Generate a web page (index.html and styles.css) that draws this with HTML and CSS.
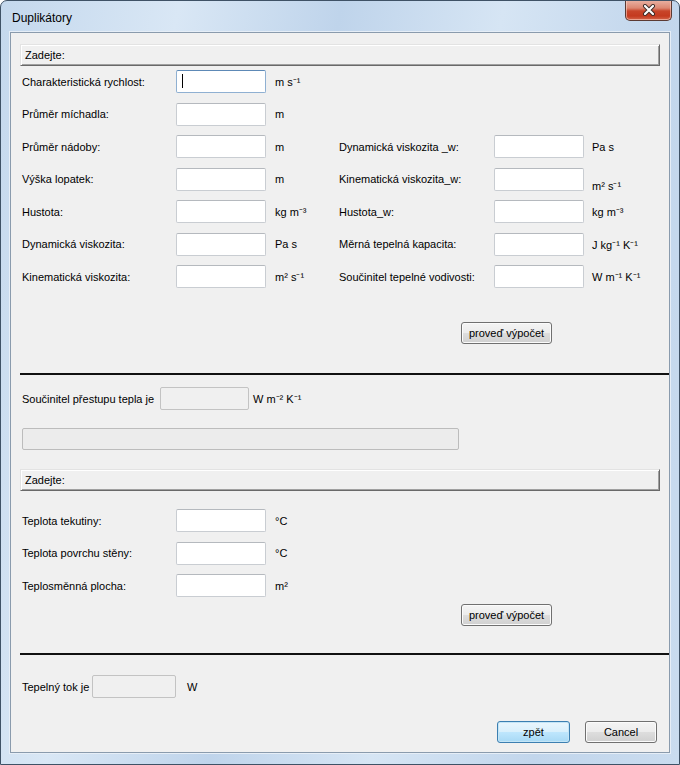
FILE: index.html
```html
<!DOCTYPE html>
<html lang="cs">
<head>
<meta charset="utf-8">
<title>Duplikátory</title>
<link rel="stylesheet" href="styles.css">
</head>
<body>
<div class="window">
  <div class="titlebar">
    <span class="title">Duplikátory</span>
    <button class="close" type="button" aria-label="Zavřít">
      <svg width="14" height="12" viewBox="0 0 14 12">
        <path d="M3 2 L11 10 M11 2 L3 10" stroke="#3b2a26" stroke-width="4" stroke-linecap="round"/>
        <path d="M3 2 L11 10 M11 2 L3 10" stroke="#ffffff" stroke-width="2.2" stroke-linecap="round"/>
      </svg>
    </button>
  </div>
  <div class="client">
    <div class="section-head">Zadejte:</div>
    <div class="form-grid">
      <label>Charakteristická rychlost:</label>
      <div class="field focused"><input type="text"><span class="caret"></span></div>
      <span class="unit">m s⁻¹</span>
      <span></span><span></span><span></span>

      <label>Průměr míchadla:</label>
      <input type="text">
      <span class="unit">m</span>
      <span></span><span></span><span></span>

      <label>Průměr nádoby:</label>
      <input type="text">
      <span class="unit">m</span>
      <label>Dynamická viskozita _w:</label>
      <input type="text">
      <span class="unit right">Pa s</span>

      <label>Výška lopatek:</label>
      <input type="text">
      <span class="unit">m</span>
      <label>Kinematická viskozita_w:</label>
      <input type="text">
      <span class="unit right low">m² s⁻¹</span>

      <label>Hustota:</label>
      <input type="text">
      <span class="unit">kg m⁻³</span>
      <label>Hustota_w:</label>
      <input type="text">
      <span class="unit right">kg m⁻³</span>

      <label>Dynamická viskozita:</label>
      <input type="text">
      <span class="unit">Pa s</span>
      <label>Měrná tepelná kapacita:</label>
      <input type="text">
      <span class="unit right">J kg⁻¹ K⁻¹</span>

      <label>Kinematická viskozita:</label>
      <input type="text">
      <span class="unit">m² s⁻¹</span>
      <label>Součinitel tepelné vodivosti:</label>
      <input type="text">
      <span class="unit right">W m⁻¹ K⁻¹</span>
    </div>
    <button class="btn calc" type="button">proveď výpočet</button>
    <div class="sep"></div>
    <div class="result-row">
      <span class="result-label">Součinitel přestupu tepla je</span>
      <input class="readonly coef" type="text" disabled>
      <span class="result-unit">W m⁻² K⁻¹</span>
    </div>
    <div class="wide-box"></div>
    <div class="section-head second">Zadejte:</div>
    <div class="form-grid small">
      <label>Teplota tekutiny:</label>
      <input type="text">
      <span class="unit">°C</span>

      <label>Teplota povrchu stěny:</label>
      <input type="text">
      <span class="unit">°C</span>

      <label>Teplosměnná plocha:</label>
      <input type="text">
      <span class="unit">m²</span>
    </div>
    <button class="btn calc second" type="button">proveď výpočet</button>
    <div class="sep second"></div>
    <div class="flux-row">
      <span class="flux-label">Tepelný tok je</span>
      <input class="readonly flux" type="text" disabled>
      <span class="flux-unit">W</span>
    </div>
    <div class="footer">
      <button class="btn default back" type="button">zpět</button>
      <button class="btn cancel" type="button">Cancel</button>
    </div>
  </div>
</div>
</body>
</html>
```
FILE: styles.css
```css
* { box-sizing: border-box; }

html, body {
  margin: 0;
  padding: 0;
  background: #ffffff;
}

body {
  font-family: "Liberation Sans", Arial, sans-serif;
  font-size: 11px;
  color: #000000;
}

.window {
  width: 680px;
  height: 765px;
  border: 1px solid #3f5266;
  border-radius: 7px 7px 0 0;
  padding: 0 9px;
  background: linear-gradient(100deg, #c4d8ed 0%, #d9e7f5 22%, #bfd4eb 42%, #d6e5f4 62%, #c2d6ec 82%, #cadcef 100%);
  display: flex;
  flex-direction: column;
  overflow: hidden;
}

.titlebar {
  height: 31px;
  display: flex;
  justify-content: space-between;
  align-items: flex-start;
}

.title {
  font-size: 12px;
  padding: 10px 0 0 2px;
  line-height: 15px;
  color: #000000;
}

.close {
  width: 47px;
  height: 21px;
  margin: -1px -2px 0 0;
  padding: 0;
  border: 1px solid #5b3a33;
  border-top: none;
  border-radius: 0 0 5px 5px;
  background: linear-gradient(#eab3a5 0%, #dc8772 40%, #c8452a 55%, #c43a1f 80%, #d4654a 100%);
  box-shadow: inset 0 0 0 1px rgba(255, 220, 210, 0.55);
  display: flex;
  align-items: center;
  justify-content: center;
}

.client {
  height: 721px;
  border: 1px solid #8a9bad;
  background: #f0f0f0;
  padding-left: 9px;
  display: flex;
  flex-direction: column;
  align-items: flex-start;
  box-shadow: 0 0 0 1px #e6eef7;
}

.section-head {
  margin-top: 11px;
  width: 640px;
  height: 22px;
  padding-left: 4px;
  line-height: 20px;
  background: #f0f0f0;
  border: 1px solid;
  border-color: #e3e3e3 #696969 #696969 #e3e3e3;
  box-shadow: inset 1px 1px 0 #ffffff, inset -1px -1px 0 #a0a0a0;
}

.section-head.second {
  margin-top: 19px;
}

.form-grid {
  margin-top: 4px;
  padding-left: 2px;
  display: grid;
  grid-template-columns: 154px 90px 73px 155px 90px auto;
  grid-auto-rows: 23px;
  row-gap: 9.5px;
  align-items: center;
}

.form-grid.small {
  margin-top: 18px;
  grid-template-columns: 154px 90px auto;
}

input {
  width: 90px;
  height: 23px;
  margin: 0;
  padding: 0 4px;
  border: 1px solid #c9cdd2;
  border-top-color: #b5b9be;
  border-radius: 2px;
  background: #ffffff;
  font-family: inherit;
  font-size: 11px;
  outline: none;
}

.field {
  position: relative;
  width: 90px;
  height: 23px;
}

.field.focused input {
  border-color: #8fb0d2;
  border-top-color: #5d89b6;
}

.caret {
  position: absolute;
  left: 6px;
  top: 4px;
  width: 1px;
  height: 14px;
  background: #000000;
}

.unit {
  padding-left: 9px;
  white-space: nowrap;
}

.unit.right {
  padding-left: 8px;
}

.unit.low {
  margin-top: 12px;
}

.btn {
  height: 22px;
  padding: 0 4px;
  border: 1px solid #707070;
  border-radius: 3px;
  background: linear-gradient(#f4f4f4 0%, #ececec 48%, #dddddd 52%, #d0d0d0 100%);
  box-shadow: inset 0 0 0 1px #fbfbfb;
  font-family: inherit;
  font-size: 11px;
  color: #000000;
}

.calc {
  width: 91px;
  margin-top: 34px;
  margin-left: 441px;
}

.calc.second {
  margin-top: 7px;
}

.sep {
  margin-top: 29px;
  width: 100%;
  height: 2px;
  background: #111111;
}

.sep.second {
  margin-top: 27px;
}

.result-row {
  margin-top: 12px;
  padding-left: 2px;
  display: flex;
  align-items: center;
  height: 23px;
}

.result-label {
  width: 138px;
}

.readonly {
  background: #f0f0f0;
  border-color: #c3c3c3;
}

.coef {
  width: 89px;
}

.result-unit {
  margin-left: 4px;
}

.wide-box {
  margin-top: 18px;
  margin-left: 2px;
  width: 437px;
  height: 22px;
  border: 1px solid #bcbcbc;
  border-radius: 2px;
  background: #ececec;
}

.flux-row {
  margin-top: 20px;
  padding-left: 2px;
  display: flex;
  align-items: center;
  height: 23px;
}

.flux-label {
  width: 70px;
}

.flux {
  width: 84px;
}

.flux-unit {
  margin-left: 11px;
}

.footer {
  margin-top: 23px;
  width: 100%;
  padding-right: 12px;
  display: flex;
  justify-content: flex-end;
  gap: 15px;
}

.back {
  width: 73px;
}

.cancel {
  width: 72px;
}

.default {
  border-color: #3c7fb1;
  background: linear-gradient(#eaf6fd 0%, #d9f0fc 48%, #bee6fd 52%, #a7d9f5 100%);
  box-shadow: inset 0 0 0 1px #c4e5f6;
}
```
